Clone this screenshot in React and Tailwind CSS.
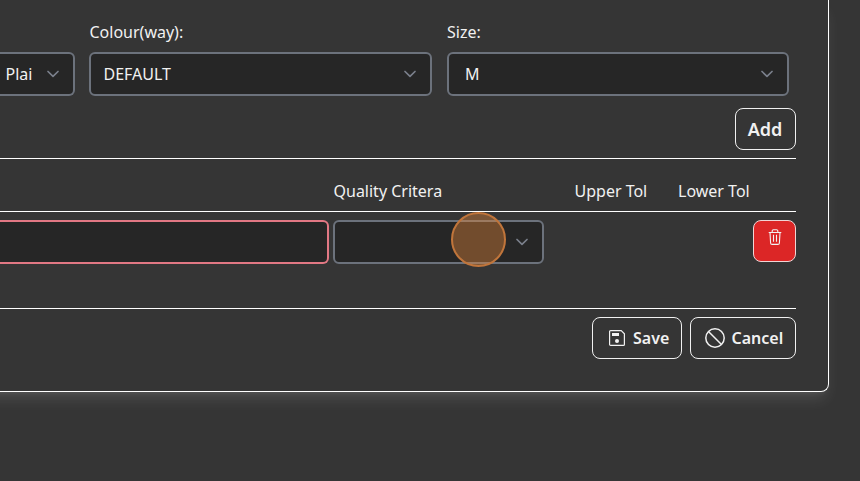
import React from "react";

function Chevron() {
  return (
    <svg viewBox="0 0 14 10" className="h-[10px] w-[14px] shrink-0 text-[#7b808c]" fill="none" stroke="currentColor" strokeWidth="1.7" strokeLinecap="round" strokeLinejoin="round">
      <path d="M2 2.5 7 7.3l5-4.8" />
    </svg>
  );
}

function Select({ value, className }) {
  return (
    <div className={`flex h-11 items-center justify-between rounded-md border-2 border-[#6c727c] bg-[#262626] pr-[13px] ${className}`}>
      <span>{value}</span>
      <Chevron />
    </div>
  );
}

function Button({ children, className }) {
  return (
    <button className={`flex h-[42px] items-center rounded-lg border border-[#f0f0f0] font-semibold ${className}`}>
      {children}
    </button>
  );
}

function SaveIcon() {
  return (
    <svg viewBox="0 0 16 16" className="h-4 w-4" fill="none" stroke="currentColor" strokeWidth="1.2">
      <path d="M1.6.6h10.6l3.2 3.2v10.6a1 1 0 0 1-1 1H1.6a1 1 0 0 1-1-1V1.6a1 1 0 0 1 1-1Z" />
      <path d="M3 3h7v3H3z" fill="currentColor" stroke="none" />
      <circle cx="8" cy="10.9" r="2" fill="currentColor" stroke="none" />
    </svg>
  );
}

function BanIcon() {
  return (
    <svg viewBox="0 0 20 20" className="h-5 w-5" fill="none" stroke="currentColor" strokeWidth="1.5">
      <circle cx="10" cy="10" r="9.2" />
      <path d="m3.5 3.5 13 13" />
    </svg>
  );
}

function TrashIcon() {
  return (
    <svg viewBox="0 0 14 16" className="h-4 w-3.5" fill="none" stroke="currentColor" strokeWidth="1.1">
      <path d="M.7 3.5h12.6M4.2 3.2V2a1.2 1.2 0 0 1 1.2-1.2h3.2A1.2 1.2 0 0 1 9.8 2v1.2M2 3.7l.6 10.2a1.5 1.5 0 0 0 1.5 1.5h5.8a1.5 1.5 0 0 0 1.5-1.5L12 3.7M5.5 5.8v7M8.5 5.8v7" />
    </svg>
  );
}

export default function App() {
  return (
    <div className="relative h-[481px] w-[860px] overflow-hidden bg-[#353535] font-['Noto_Sans',sans-serif] text-base leading-6 text-[#f1f1f1]">
      <main className="-ml-8 h-[392px] w-[861px] rounded-br-lg border-r border-b border-white pt-5 pr-8 pl-8 shadow-[0_10px_15px_-3px_rgba(255,255,255,0.11),0_4px_6px_-4px_rgba(255,255,255,0.11)]">
        <section className="flex h-[76px]">
          <div className="w-[75px] pt-8">
            <Select value="Plai" className="rounded-l-none border-l-0 pl-[5.5px]" />
          </div>
          <div className="ml-[14px] w-[343px]">
            <label className="mb-2 block pl-[0.5px]">Colour(way):</label>
            <Select value="DEFAULT" className="pl-[12.5px]" />
          </div>
          <div className="ml-[15px] w-[342px]">
            <label className="mb-2 block">Size:</label>
            <Select value="M" className="pl-4" />
          </div>
        </section>
        <div className="flex h-[62px] justify-end pt-3">
          <Button className="w-[61px] justify-center pr-px text-lg">Add</Button>
        </div>
        <div className="flex h-[54px] border-y border-white pt-5 pl-[333.5px]">
          <span className="w-[241px]">Quality Critera</span>
          <span className="w-[103.5px]">Upper Tol</span>
          <span>Lower Tol</span>
        </div>
        <div className="flex h-[97px] items-start gap-1 border-b border-white pt-2">
          <div className="h-11 w-[329px] rounded-r-md border-2 border-l-0 border-[#e27884] bg-[#262626]" />
          <Select value="" className="w-[211px]" />
          <button className="ml-auto flex h-[42px] w-[43px] justify-center rounded-lg border border-[#f0d5d5] bg-[#dc2626] pt-2">
            <TrashIcon />
          </button>
        </div>
        <div className="flex justify-end gap-2 pt-2">
          <Button className="w-[90px] pl-4"><SaveIcon /><span className="ml-2">Save</span></Button>
          <Button className="w-[106px] pl-[14px]"><BanIcon /><span className="ml-[6.5px]">Cancel</span></Button>
        </div>
      </main>
      <div className="absolute left-[451px] top-[212px] h-[55px] w-[55px] rounded-full border-2 border-[#c0753b] bg-[#e68839]/40" />
    </div>
  );
}
